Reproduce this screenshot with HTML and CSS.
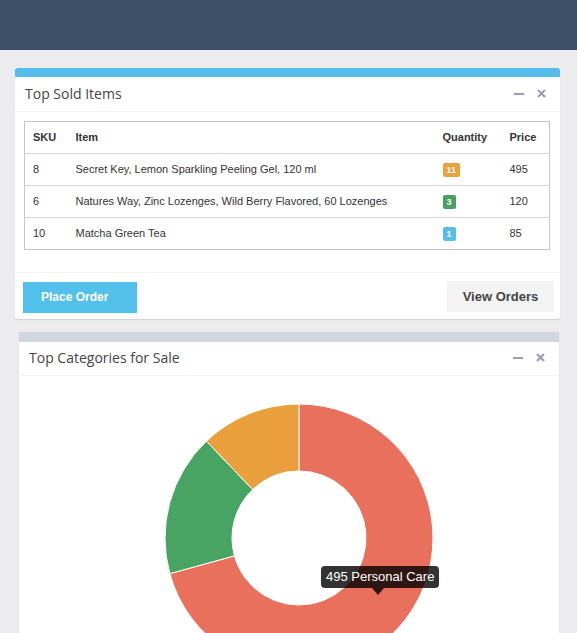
FILE: index.html
```html
<!DOCTYPE html>
<html>
<head>
<meta charset="utf-8">
<link rel="stylesheet" href="styles.css">
</head>
<body>
<header class="topbar"></header>
<main class="content">
  <section class="box box--sold">
    <div class="box-header">
      <h3 class="box-title">Top Sold Items</h3>
      <div class="box-tools">
        <span class="tool tool--min"><svg width="10" height="10" viewBox="0 0 10 10"><rect x="0" y="4" width="10" height="2" fill="#97a0b3"/></svg></span>
        <span class="tool tool--close"><svg width="9" height="9" viewBox="0 0 9 9"><path d="M1 1L8 8M8 1L1 8" stroke="#97a0b3" stroke-width="2.2"/></svg></span>
      </div>
    </div>
    <div class="box-body">
      <table class="items">
        <colgroup>
          <col class="c-sku"><col class="c-item"><col class="c-qty"><col class="c-price">
        </colgroup>
        <thead>
          <tr><th>SKU</th><th>Item</th><th>Quantity</th><th>Price</th></tr>
        </thead>
        <tbody>
          <tr><td>8</td><td>Secret Key, Lemon Sparkling Peeling Gel, 120 ml</td><td><span class="badge badge--orange">11</span></td><td>495</td></tr>
          <tr><td>6</td><td>Natures Way, Zinc Lozenges, Wild Berry Flavored, 60 Lozenges</td><td><span class="badge badge--green">3</span></td><td>120</td></tr>
          <tr><td>10</td><td>Matcha Green Tea</td><td><span class="badge badge--blue">1</span></td><td>85</td></tr>
        </tbody>
      </table>
    </div>
    <div class="box-footer">
      <a class="btn btn--info">Place Order</a>
      <a class="btn btn--default">View Orders</a>
    </div>
  </section>

  <section class="box box--cats">
    <div class="box-header box-header--cats">
      <h3 class="box-title">Top Categories for Sale</h3>
      <div class="box-tools">
        <span class="tool tool--min"><svg width="10" height="10" viewBox="0 0 10 10"><rect x="0" y="4" width="10" height="2" fill="#97a0b3"/></svg></span>
        <span class="tool tool--close"><svg width="9" height="9" viewBox="0 0 9 9"><path d="M1 1L8 8M8 1L1 8" stroke="#97a0b3" stroke-width="2.2"/></svg></span>
      </div>
    </div>
    <div class="chart-body">
      <svg class="donut" width="540" height="300" viewBox="0 0 540 300">
        <path d="M280 27 A134 134 0 1 1 150.83 196.65 L215.41 178.83 A67 67 0 1 0 280 94 Z" fill="#e8705c" stroke="#fff" stroke-width="1"/>
        <path d="M150.83 196.65 A134 134 0 0 1 187.40 64.14 L233.70 112.57 A67 67 0 0 0 215.41 178.83 Z" fill="#48a462" stroke="#fff" stroke-width="1"/>
        <path d="M187.40 64.14 A134 134 0 0 1 280 27 L280 94 A67 67 0 0 0 233.70 112.57 Z" fill="#e9a03c" stroke="#fff" stroke-width="1"/>
      </svg>
      <div class="tooltip">495 Personal Care</div>
    </div>
  </section>
</main>
</body>
</html>
```

FILE: styles.css
```css
html, body {
  margin: 0;
  padding: 0;
}
body {
  background: #ecebee;
  font-family: "Liberation Sans", Arial, sans-serif;
  color: #333;
  overflow: hidden;
}
.topbar {
  height: 50px;
  background: #3e5068;
}
.content {
  padding-top: 18px;
}
.box {
  background: #fff;
  border-radius: 3px;
  box-shadow: 0 1px 1px rgba(0, 0, 0, 0.12);
}
.box--sold {
  margin: 0 17px 0 15px;
  border-top: 9px solid #55bdea;
}
.box--cats {
  margin: 13px 18px 0 19px;
  border-top: 10px solid #d2d6de;
  border-radius: 0;
}
.box-header {
  height: 35px;
  box-sizing: border-box;
  border-bottom: 1px solid #f4f4f4;
  padding: 0 10px 2px 10px;
  display: flex;
  align-items: center;
  justify-content: space-between;
}
.box-header--cats {
  height: 34px;
  padding-bottom: 3px;
}
.box-title {
  margin: 0;
  font-family: "Open Sans", sans-serif;
  font-weight: 400;
  font-size: 14px;
  color: #444;
}
.box-tools {
  display: flex;
  align-items: center;
  gap: 13px;
  padding-right: 4px;
  margin-top: 1px;
}
.tool {
  display: flex;
  align-items: center;
}
.box-body {
  padding: 9px 10px 22px 9px;
}
.items {
  width: 100%;
  border-collapse: collapse;
  border: 1px solid #c4c4c4;
  font-size: 11px;
  table-layout: fixed;
}
.c-sku { width: 43px; }
.c-qty { width: 67px; }
.c-price { width: 48px; }
.items th, .items td {
  padding: 8px 8px;
  line-height: 15px;
  text-align: left;
  vertical-align: middle;
}
.items th {
  font-weight: 700;
}
.items tbody td {
  border-top: 1px solid #d6d6d6;
}
.items thead th {
  border-bottom: 1px solid #d6d6d6;
}
.badge {
  display: inline-block;
  font-size: 9px;
  font-weight: 700;
  line-height: 10px;
  color: #fff;
  padding: 2px 4px;
  border-radius: 2px;
  vertical-align: middle;
}
.badge--orange { background: #e9a23c; }
.badge--green { background: #46a05f; }
.badge--blue { background: #55bde9; }
.box-footer {
  border-top: 1px solid #f4f4f4;
  padding: 8px 6px 6px 8px;
  display: flex;
  justify-content: space-between;
  align-items: center;
}
.btn {
  display: inline-block;
  box-sizing: border-box;
  height: 31px;
  line-height: 31px;
  font-weight: 700;
  font-size: 12px;
}
.btn--info {
  background: #53bfeb;
  color: #fff;
  width: 114px;
  padding-left: 18px;
  margin-top: 1px;
}
.btn--default {
  background: #f3f3f3;
  color: #444;
  width: 107px;
  font-size: 13px;
  text-align: center;
  margin-top: -1px;
}
.chart-body {
  position: relative;
  height: 300px;
  padding-top: 1px;
}
.donut {
  display: block;
}
.tooltip {
  position: absolute;
  left: 302px;
  top: 190px;
  background: rgba(0, 0, 0, 0.8);
  color: #fff;
  font-size: 13px;
  line-height: 14px;
  padding: 4px 5px;
  border-radius: 4px;
  white-space: nowrap;
}
.tooltip::after {
  content: "";
  position: absolute;
  left: 51px;
  top: 100%;
  border-left: 6px solid transparent;
  border-right: 6px solid transparent;
  border-top: 7px solid rgba(0, 0, 0, 0.8);
}
```
